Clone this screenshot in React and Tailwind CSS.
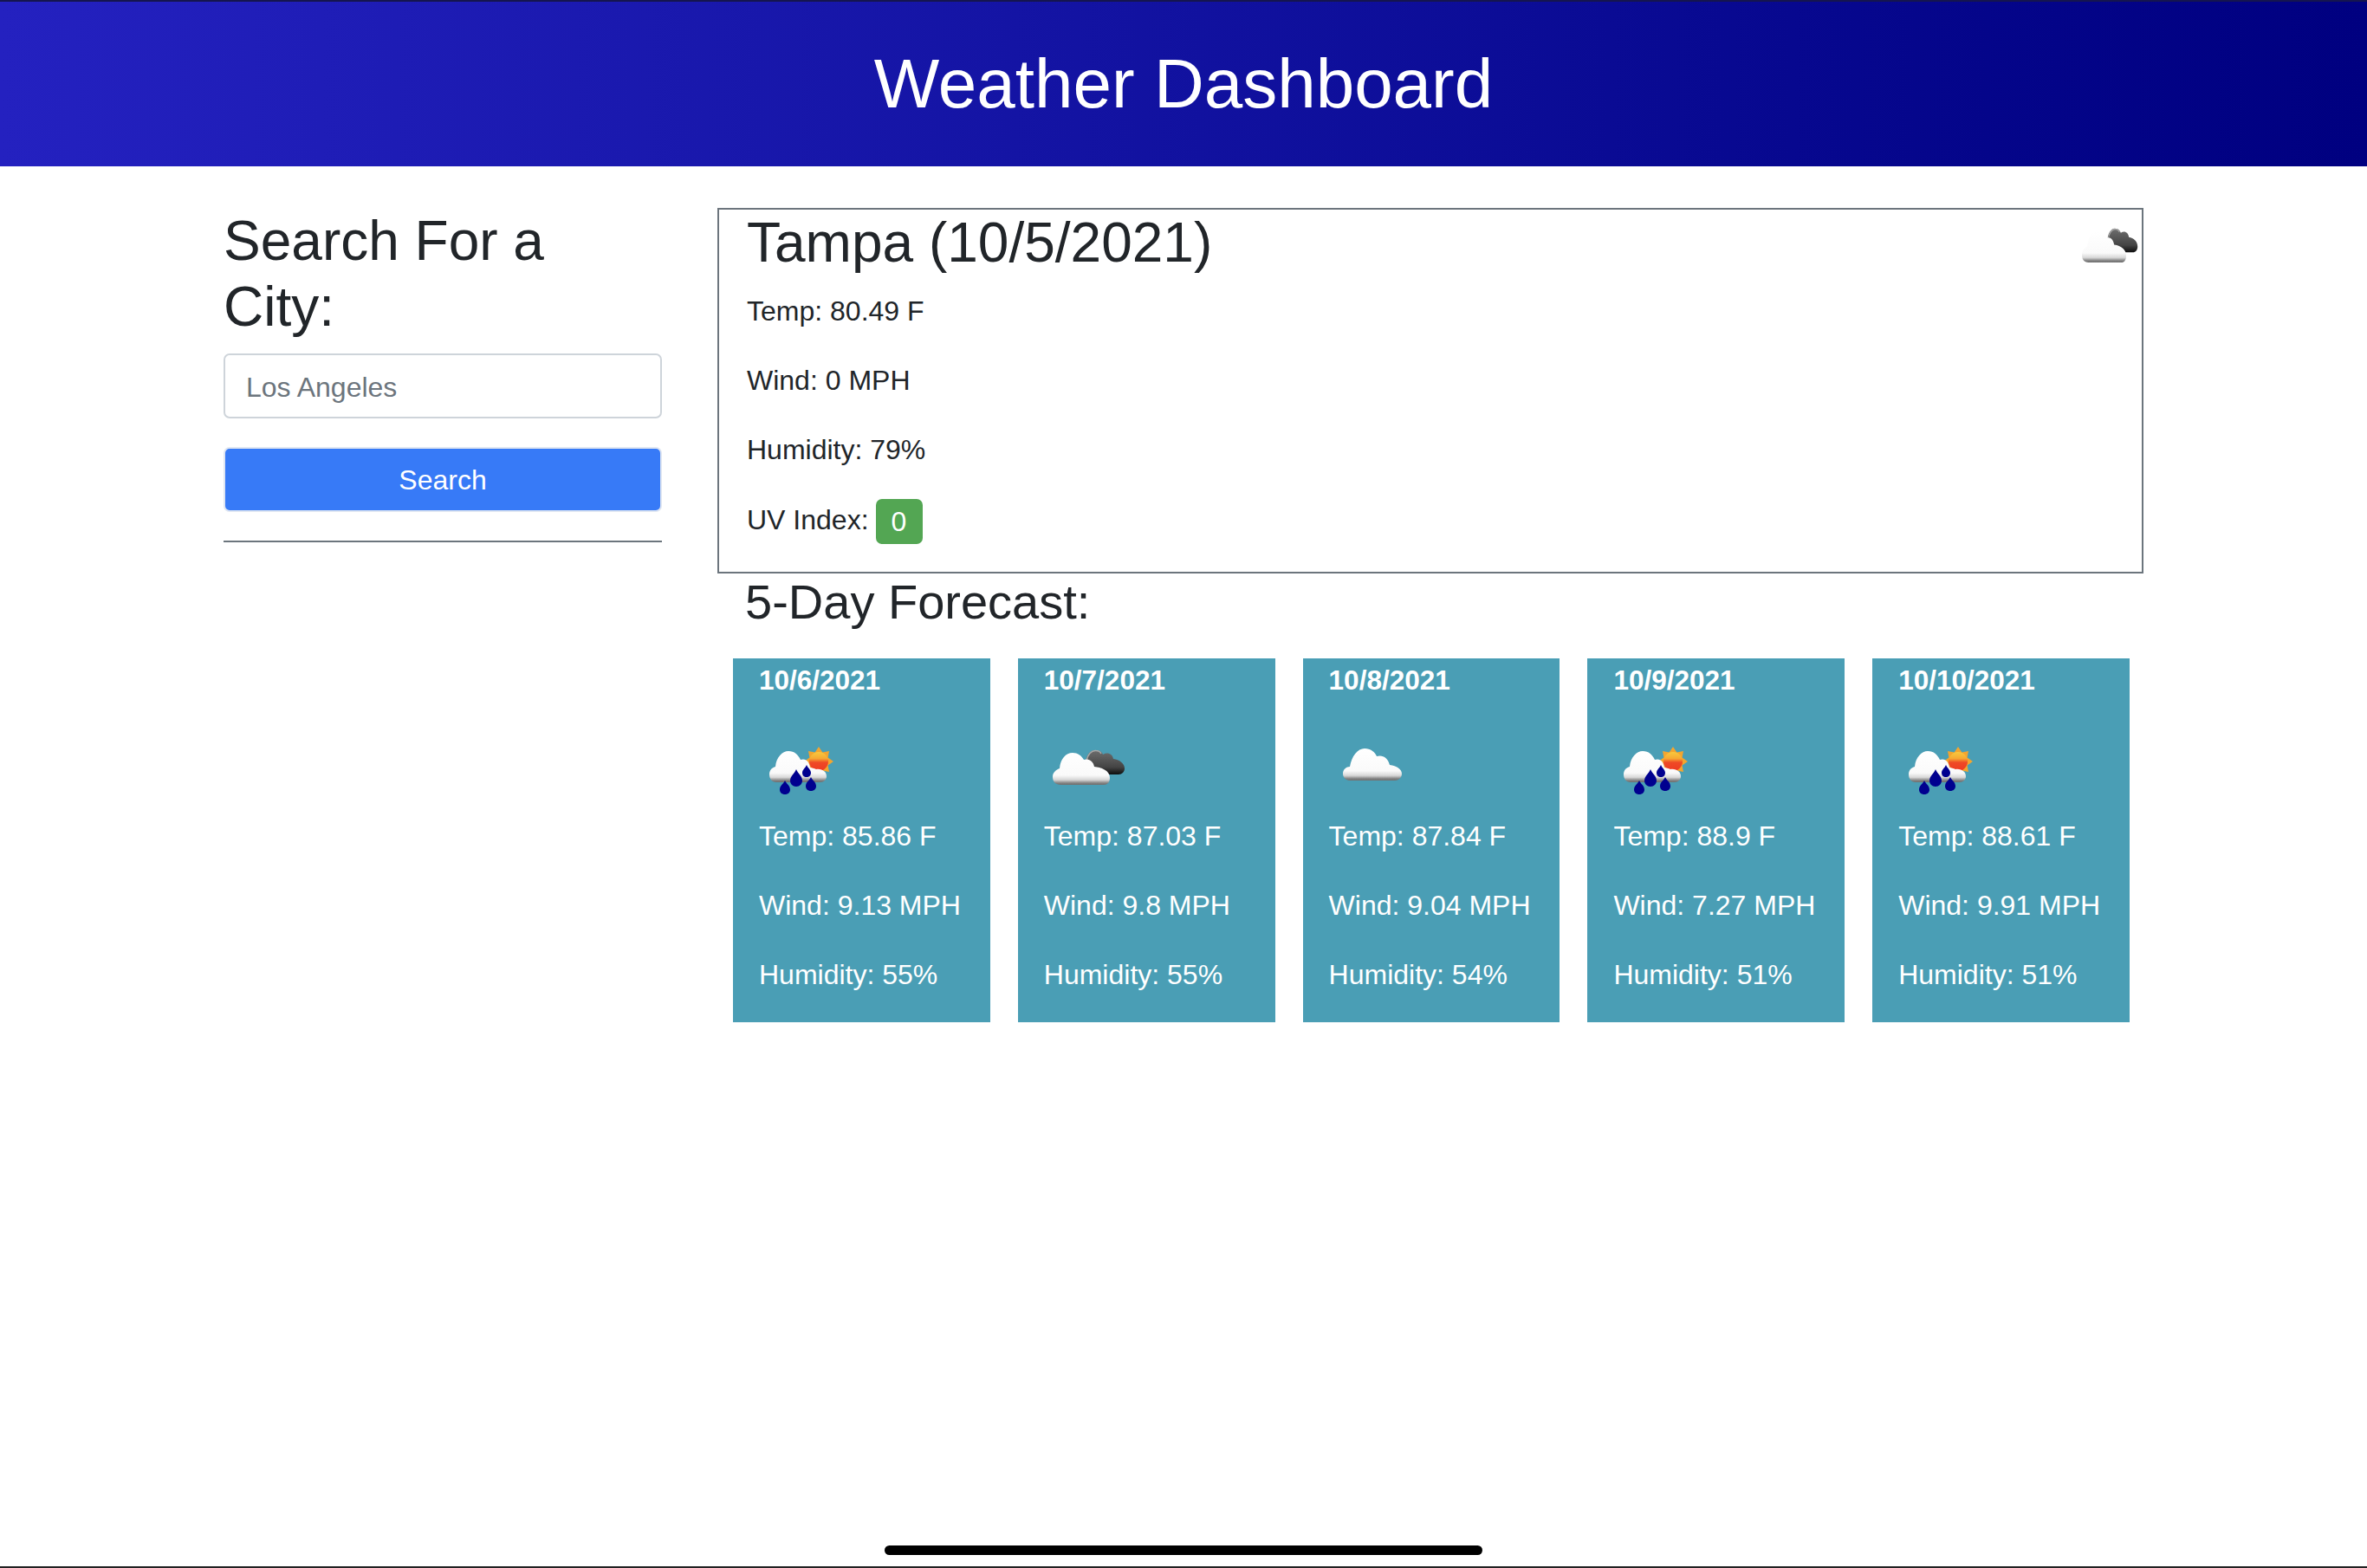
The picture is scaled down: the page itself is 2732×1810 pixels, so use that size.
import React from 'react';

const forecast = [
  { date: '10/6/2021', icon: 'rain', temp: '85.86', wind: '9.13', humidity: '55' },
  { date: '10/7/2021', icon: 'clouds', temp: '87.03', wind: '9.8', humidity: '55' },
  { date: '10/8/2021', icon: 'cloud', temp: '87.84', wind: '9.04', humidity: '54' },
  { date: '10/9/2021', icon: 'rain', temp: '88.9', wind: '7.27', humidity: '51' },
  { date: '10/10/2021', icon: 'rain', temp: '88.61', wind: '9.91', humidity: '51' },
];

const whiteCloud = 'M10 41 C3 41 0 37 0 32 C0 27 3 24 8 22 C9 11 15 4 23 4 C29 4 33 7 36 12 C42 10 47 14 48 20 C59 21 66 26 66 33 C66 38 63 41 59 41 Z';

function CloudFill({ id, top, bottom }) {
  return (
    <linearGradient id={id} gradientUnits="userSpaceOnUse" x1="0" y1={top} x2="0" y2={bottom}>
      <stop offset="0" stopColor="#ffffff" />
      <stop offset="0.68" stopColor="#fafafa" />
      <stop offset="0.82" stopColor="#d8d8d8" />
      <stop offset="0.92" stopColor="#808080" />
      <stop offset="1" stopColor="#666666" />
    </linearGradient>
  );
}

function CloudsIcon({ className, stretch }) {
  return (
    <svg className={className} viewBox="0 0 84 43" fill="none" preserveAspectRatio={stretch ? 'none' : undefined}>
      <defs>
        <CloudFill id="white-a" top="4" bottom="42" />
        <linearGradient id="dark-a" x1="0" y1="0" x2="0" y2="1">
          <stop offset="0" stopColor="#6e6e6e" />
          <stop offset="0.7" stopColor="#444444" />
          <stop offset="1" stopColor="#0d0d0d" />
        </linearGradient>
      </defs>
      <path d="M38 14 C39 6 44 0 50 1 C54 1 57 3 58 6 C63 3 69 5 70 11 C77 12 83 16 83 22 C83 26 80 29 76 29 L50 29 Z" fill="url(#dark-a)" />
      <path d="M39 14 C40 6 45 1 50 1.5 C53 1.5 55 3 56 5" stroke="#a8a8a8" strokeWidth="1.5" />
      <path d={whiteCloud} fill="url(#white-a)" />
    </svg>
  );
}

function CloudIcon({ className }) {
  return (
    <svg className={className} viewBox="0 0 68 38" fill="none">
      <defs>
        <CloudFill id="white-b" top="0" bottom="38" />
      </defs>
      <path d="M8 37 C3 37 0 33 0 29 C0 24 4 21 8 21 C10 9 17 0 25 0 C32 0 37 4 39 9 C46 7 52 11 54 19 C62 20 68 24 68 29 C68 33 65 37 60 37 Z" fill="url(#white-b)" />
    </svg>
  );
}

function RainIcon({ className }) {
  return (
    <svg className={className} viewBox="0 0 74 55" fill="none">
      <defs>
        <CloudFill id="white-c" top="5" bottom="42" />
        <linearGradient id="sun-c" x1="0" y1="0" x2="0" y2="1">
          <stop offset="0" stopColor="#f8c93e" />
          <stop offset="0.35" stopColor="#f6a832" />
          <stop offset="0.55" stopColor="#ef4a26" />
          <stop offset="1" stopColor="#ee3a22" />
        </linearGradient>
      </defs>
      <polygon
        points="74,17 67.6,21.4 69,29 61.4,27.6 57,34 52.6,27.6 45,29 46.4,21.4 40,17 46.4,12.6 45,5 52.6,6.4 57,0 61.4,6.4 69,5 67.6,12.6"
        fill="#f3a52f"
      />
      <circle cx="57" cy="17" r="11" fill="url(#sun-c)" />
      <path d="M8 41 C3 41 0 37 0 32 C0 27 3 24 7 23 C8 12 15 5 22 5 C29 5 33 9 36 15 C42 13 46 17 47 24 C49 24 52 25 54 26 C61 25 66 29 66 34 C66 38 63 41 59 41 Z" fill="url(#white-c)" />
      <path d="M18 39 C20 43 24 45 24 49.5 C24 52.8 21.5 55 18 55 C14.5 55 12 52.8 12 49.5 C12 45 16 43 18 39 Z" fill="#00008f" />
      <path d="M31 26 C33 31 38 34 38 39 C38 43 35 46 31 46 C27 46 24 43 24 39 C24 34 29 31 31 26 Z" fill="#00008f" />
      <path d="M43 21 C44 24 48 26.5 48 30 C48 33 46 35 43 35 C40 35 38 33 38 30 C38 26.5 42 24 43 21 Z" fill="#00008f" />
      <path d="M48 35 C50 39 54 41 54 45.5 C54 48.8 51.5 51 48 51 C44.5 51 42 48.8 42 45.5 C42 41 46 39 48 35 Z" fill="#00008f" />
    </svg>
  );
}

function ForecastCard({ day }) {
  return (
    <div className="flex h-[420px] flex-col bg-[#4a9eb5] pl-[30px] pt-[4px] text-white">
      <p className="text-[31.5px] font-bold leading-[42px]">{day.date}</p>
      <div className="h-[138px]">
        {day.icon === 'rain' && <RainIcon className="ml-[12px] mt-[56px] h-[55px] w-[74px] blur-[0.4px]" />}
        {day.icon === 'clouds' && <CloudsIcon className="ml-[10px] mt-[59px] h-[43px] w-[84px] blur-[0.4px]" />}
        {day.icon === 'cloud' && <CloudIcon className="ml-[16px] mt-[58px] h-[38px] w-[68px] blur-[0.4px]" />}
      </div>
      <div className="flex flex-col gap-[38px] text-[32px] leading-[42px]">
        <p>Temp: {day.temp} F</p>
        <p>Wind: {day.wind} MPH</p>
        <p>Humidity: {day.humidity}%</p>
      </div>
    </div>
  );
}

export default function App() {
  return (
    <div className="relative flex h-[1810px] flex-col border-b-2 border-[#222222] bg-white font-['Liberation_Sans',Arial,sans-serif] text-[#212529]">
      <header className="flex h-[192px] items-center justify-center border-t-2 border-[#15154f] bg-gradient-to-r from-[#2421c0] to-[#000080]">
        <h1 className="text-[80px] leading-none text-white">Weather Dashboard</h1>
      </header>

      <div className="flex gap-[64px] px-[258px] pt-[48px]">
        <aside className="w-[506px] shrink-0">
          <h2 className="text-[64px] leading-[76px]">Search For a City:</h2>
          <input
            className="mt-[16px] h-[75px] w-full rounded-[7px] border-2 border-[#ced4da] bg-white px-[24px] pt-[3px] text-[32px] outline-none placeholder:text-[#6c757d]"
            placeholder="Los Angeles"
            type="text"
          />
          <button className="mt-[33px] h-[75px] w-full rounded-[7px] border-2 border-[#dfe6f2] bg-[#377af7] text-[32px] text-white">
            Search
          </button>
          <hr className="mt-[33px] border-t-2 border-[#6c757d]" />
        </aside>

        <main className="min-w-0 flex-1">
          <section className="h-[422px] border-2 border-[#6c757d] pl-[32px] pr-[4px]">
            <div className="flex items-start justify-between">
              <h2 className="text-[64px] leading-[76px]">Tampa (10/5/2021)</h2>
              <CloudsIcon stretch className="mt-[21px] h-[42px] w-[65px] blur-[0.4px]" />
            </div>
            <div className="mt-[20px] flex flex-col gap-[38px] text-[32px] leading-[42px]">
              <p>Temp: 80.49 F</p>
              <p>Wind: 0 MPH</p>
              <p>Humidity: 79%</p>
              <div className="-mt-[2px] flex items-center gap-[8px]">
                <span className="mb-[4px]">UV Index:</span>
                <span className="flex h-[52px] w-[54px] items-center justify-center rounded-[7px] bg-[#53a653] text-white">0</span>
              </div>
            </div>
          </section>

          <h3 className="pl-[32px] text-[56px] leading-[65px]">5-Day Forecast:</h3>

          <div className="mt-[33px] grid grid-cols-5 gap-[32px] pl-[18px] pr-[16px]">
            {forecast.map((day) => (
              <ForecastCard key={day.date} day={day} />
            ))}
          </div>
        </main>
      </div>

      <div className="absolute bottom-[13px] left-[1021px] h-[11px] w-[690px] rounded-full bg-black" />
    </div>
  );
}
